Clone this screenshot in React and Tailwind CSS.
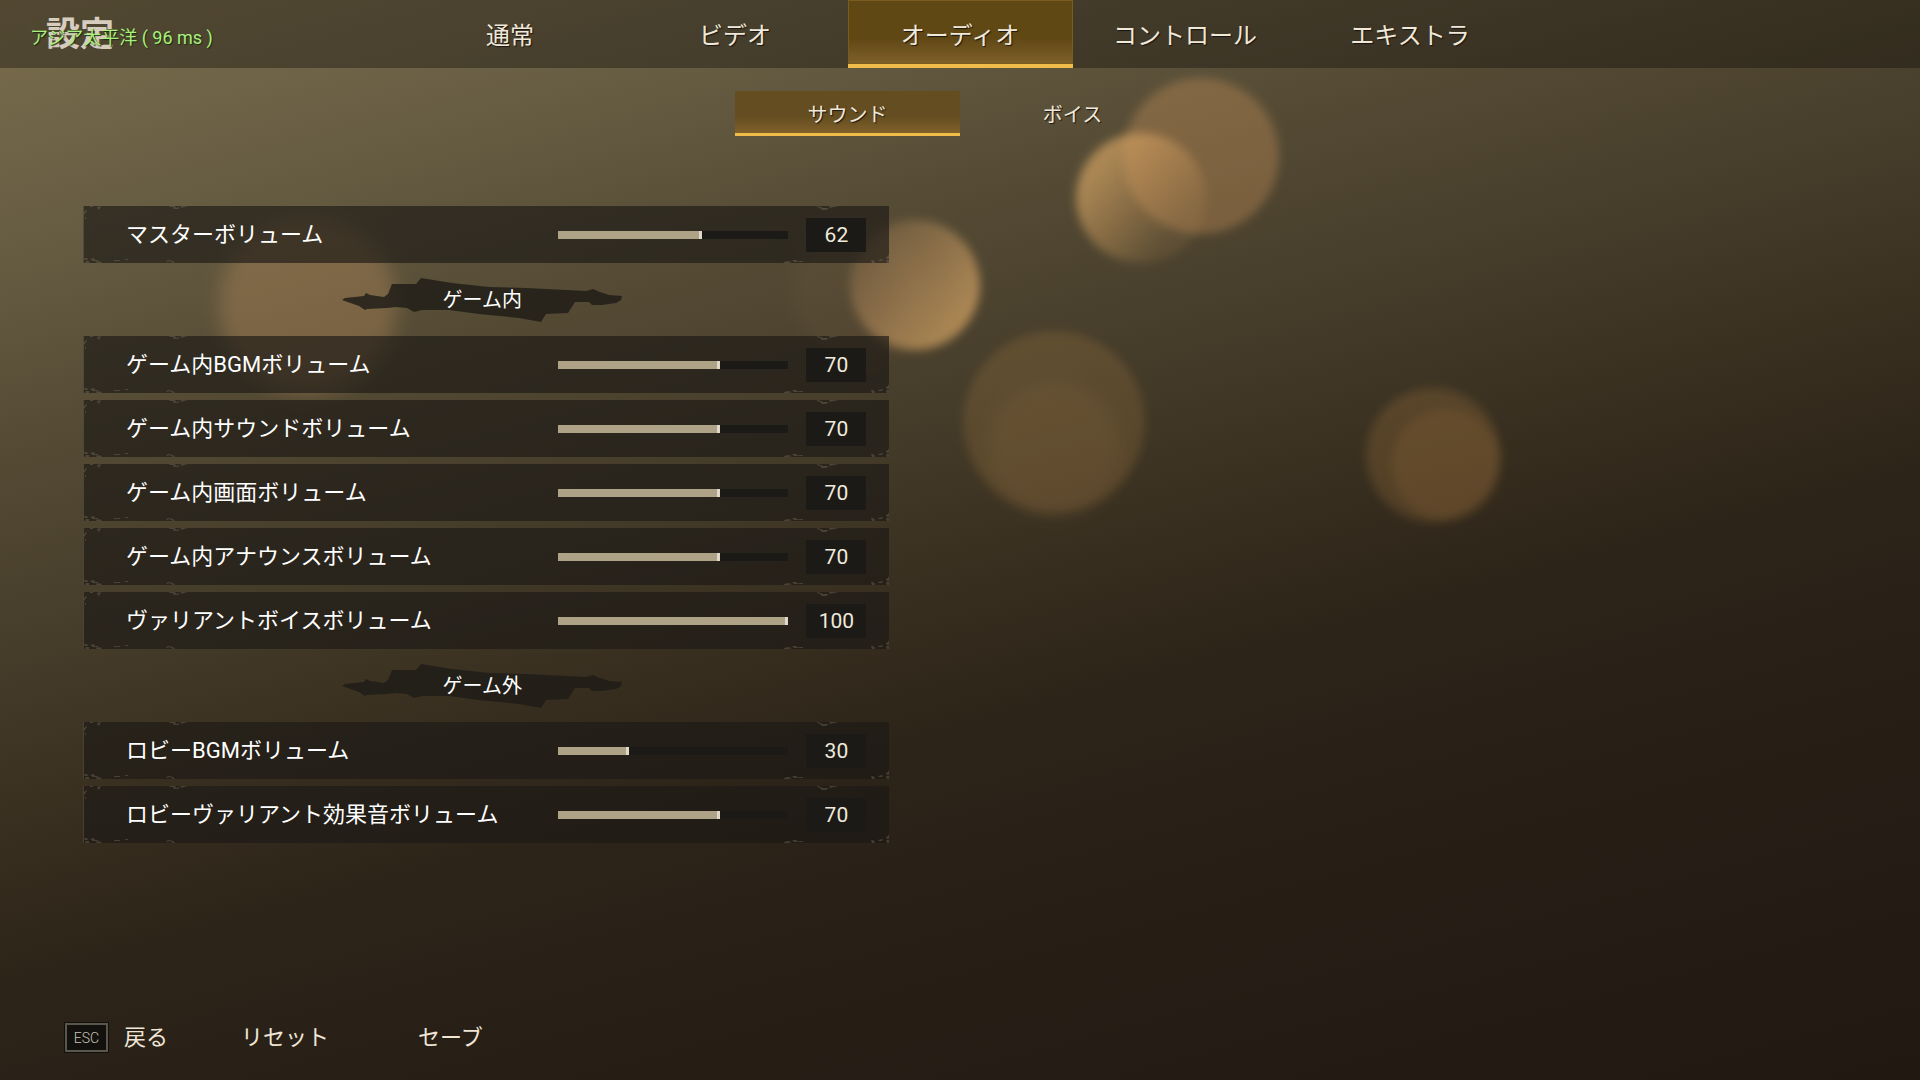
import { useState } from "react";

const tabs = ["通常", "ビデオ", "オーディオ", "コントロール", "エキストラ"];
const subTabs = ["サウンド", "ボイス"];

const groups = [
  { title: null, rows: [["マスターボリューム", 62]] },
  {
    title: "ゲーム内",
    rows: [
      ["ゲーム内BGMボリューム", 70],
      ["ゲーム内サウンドボリューム", 70],
      ["ゲーム内画面ボリューム", 70],
      ["ゲーム内アナウンスボリューム", 70],
      ["ヴァリアントボイスボリューム", 100],
    ],
  },
  {
    title: "ゲーム外",
    rows: [
      ["ロビーBGMボリューム", 30],
      ["ロビーヴァリアント効果音ボリューム", 70],
    ],
  },
];

function Bokeh() {
  return (
    <svg
      className="pointer-events-none absolute inset-0 -z-10 h-full w-full"
      viewBox="0 0 1920 1080"
      preserveAspectRatio="xMidYMid slice"
      aria-hidden="true"
    >
      <defs>
        <filter id="soft" x="-20%" y="-20%" width="140%" height="140%">
          <feGaussianBlur stdDeviation="5" />
        </filter>
        <filter id="softer" x="-20%" y="-20%" width="140%" height="140%">
          <feGaussianBlur stdDeviation="9" />
        </filter>
        <linearGradient id="litRight" x1="0.05" y1="0.1" x2="0.85" y2="0.75">
          <stop offset="0" stopColor="#e0a870" stopOpacity="0.12" />
          <stop offset="1" stopColor="#e0ac68" stopOpacity="0.64" />
        </linearGradient>
        <linearGradient id="litLeft" x1="0.15" y1="0.3" x2="0.8" y2="0.85">
          <stop offset="0" stopColor="#e0ac68" stopOpacity="0.62" />
          <stop offset="0.9" stopColor="#e0a860" stopOpacity="0.12" />
        </linearGradient>
      </defs>
      <circle cx="308" cy="305" r="89" fill="#e0a468" fillOpacity="0.25" filter="url(#softer)" />
      <circle cx="860" cy="292" r="68" fill="#e0a468" fillOpacity="0.05" filter="url(#softer)" />
      <circle cx="915" cy="285" r="65" fill="url(#litRight)" filter="url(#soft)" />
      <circle cx="1141" cy="198" r="65" fill="url(#litLeft)" filter="url(#soft)" />
      <circle cx="1201" cy="156" r="78" fill="#e0a060" fillOpacity="0.3" filter="url(#soft)" />
      <circle cx="1054" cy="422" r="91" fill="#d69850" fillOpacity="0.17" filter="url(#soft)" />
      <circle cx="1054" cy="450" r="68" fill="#d69850" fillOpacity="0.07" filter="url(#softer)" />
      <circle cx="1433" cy="455" r="67" fill="#d69850" fillOpacity="0.18" filter="url(#soft)" />
      <circle cx="1446" cy="464" r="55" fill="#d69850" fillOpacity="0.1" filter="url(#soft)" />
    </svg>
  );
}

function WornEdges() {
  return (
    <>
      <svg className="pointer-events-none absolute left-0 top-0" width="110" height="57" aria-hidden="true">
        <g fill="#a39472" fillOpacity="0.28">
          <path d="M0 0h1v57h-1zM1 6l3-2v1l-3 4zM2 11h1v2h-1zM14 1l4-1-1 2-1 2-1-1zM7 0h3v1h-3z" />
          <path d="M1 52l3 0 1 2-3 0zM7 53l4-1 1 2 3 0v1l-5 0zM3 55l3 0v2h-4zM14 55l5 1-1 1h-5zM31 54h6v1h-6zM42 53h3v1h-3z" />
          <path d="M86 0h6l1 2 4-1-2 2-4 0-1-2-3 0zM98 0h7l-4 1-3 1z" />
          <path d="M83 55l3-1 4 1 2 2h-2l-3-2-3 1z" />
        </g>
      </svg>
      <svg className="pointer-events-none absolute right-0 top-0" width="110" height="57" aria-hidden="true">
        <g fill="#a39472" fillOpacity="0.28">
          <path d="M38 0l4 1 2 1 6 0-3 2-4 0-2-2-3-1zM50 0h10l-5 1-4 1z" />
          <path d="M5 56l4-1 4 1-3 1h-5zM13 54l4 0 3 2-5 0zM20 55h4v1h-4z" />
          <path d="M110 48v5l-2 0-1-2 2-1zM107 54l3 0v3h-2zM99 54l5-1-1 2-3 0zM92 54h2l2 2-1 1h-2z" />
        </g>
      </svg>
    </>
  );
}

function VolumeRow({ label, initial, id }) {
  const [value, setValue] = useState(initial);
  return (
    <div className="relative flex h-[57px] items-center bg-[#1b1915]/65 pl-[43px] pr-[23px]">
      <WornEdges />
      <label htmlFor={id} className="flex-1 whitespace-nowrap text-[22px] leading-8 text-white">
        {label}
      </label>
      <input
        id={id}
        type="range"
        min="0"
        max="100"
        value={value}
        onChange={(e) => setValue(Number(e.target.value))}
        style={{ backgroundSize: `${value}% 100%` }}
        className="h-2 w-[230px] cursor-pointer appearance-none bg-[#1b1a17] bg-linear-to-r from-[#aea287] to-[#aea287] bg-no-repeat [&::-webkit-slider-thumb]:h-2 [&::-webkit-slider-thumb]:w-[3px] [&::-webkit-slider-thumb]:appearance-none [&::-webkit-slider-thumb]:bg-[#e0d9ca]"
      />
      <output
        htmlFor={id}
        className="ml-[18px] flex h-[34px] w-[60px] items-center justify-center bg-[#1b1a17] text-[21px] leading-8 text-[#f0eadb]"
      >
        {value}
      </output>
    </div>
  );
}

function SectionTitle({ children }) {
  return (
    <h2 className="relative isolate flex h-[73px] items-center justify-center pr-2 pt-px text-xl leading-7 text-white">
      <svg className="absolute -z-10" width="280" height="44" viewBox="0 0 280 44" aria-hidden="true">
        <path
          d="M0 22L3 20L22 18L24 15L28 17L42 19L46 16L50 6H74L79 0L110 5L147 9L184 10L225 12L244 13L251 11L258 14L267 17L280 18L279 22L274 25L260 27H250L247 24H233L226 35L204 36L199 44L177 40L137 36L107 32H80L72 34L65 30L54 29L45 30L25 31L23 32L17 28Z"
          fill="#1f1c17"
          fillOpacity="0.82"
        />
      </svg>
      {children}
    </h2>
  );
}

export default function App() {
  const [tab, setTab] = useState("オーディオ");
  const [sub, setSub] = useState("サウンド");

  return (
    <div className="relative isolate flex min-h-screen flex-col overflow-hidden bg-[linear-gradient(165deg,#7a6c4c_0%,#73674a_6%,#665c42_16%,#544a34_29%,#443b29_42%,#382f20_52%,#2d2419_62%,#281f17_72%,#211811_100%)] font-[Roboto,'Noto_Sans_CJK_JP',sans-serif]">
      <Bokeh />
      <header className="relative flex h-[68px] items-stretch justify-center bg-[#080604]/35">
        <h1 className="absolute left-[46px] top-2 text-[34px] font-bold leading-[52px] text-[#d6cdbf]">設定</h1>
        <p className="absolute left-[30px] top-[26px] text-lg leading-6 text-[#a9f07c] text-shadow-[1px_1px_1px_#1a2a10]">
          アジア太平洋 ( 96 ms )
        </p>
        <nav className="flex">
          {tabs.map((name) => (
            <button
              key={name}
              type="button"
              onClick={() => setTab(name)}
              className={
                "w-[225px] border-b-4 pt-2 text-2xl leading-8 text-[#f0e8d8] text-shadow-[1px_1px_1px_#1a1510] " +
                (tab === name
                  ? "border-[#f0bd4a] bg-linear-to-b from-[#604815] from-60% to-[#80602a] inset-ring inset-ring-[#7a5c20]"
                  : "border-transparent")
              }
            >
              {name}
            </button>
          ))}
        </nav>
      </header>

      <nav className="mt-[23px] flex justify-center">
        {subTabs.map((name) => (
          <button
            key={name}
            type="button"
            onClick={() => setSub(name)}
            className={
              "h-[45px] w-[225px] border-b-3 pt-1.5 text-xl leading-7 text-[#f0e8d8] text-shadow-[1px_1px_1px_#1a1510] " +
              (sub === name
                ? "border-[#f0bd4a] bg-linear-to-b from-[#644d20] from-60% to-[#80602a]"
                : "border-transparent")
            }
          >
            {name}
          </button>
        ))}
      </nav>

      <main className="ml-[83px] mt-[70px] w-[42%] min-w-[720px] flex-1">
        {groups.map((group, g) => (
          <section key={g}>
            {group.title && <SectionTitle>{group.title}</SectionTitle>}
            <div className="flex flex-col gap-[7px]">
              {group.rows.map(([label, value], r) => (
                <VolumeRow key={label} id={`volume-${g}-${r}`} label={label} initial={value} />
              ))}
            </div>
          </section>
        ))}
      </main>

      <footer className="flex h-[85px] items-center pl-16 text-[22px] leading-8 text-[#efe6d6]">
        <button type="button" className="flex items-center gap-[15px]">
          <kbd className="flex h-[31px] w-[45px] items-center justify-center border border-[#12100d] bg-[#12110e] font-[Roboto] text-sm font-light text-[#c9c4b6] inset-ring-2 inset-ring-[#5a564c]">
            ESC
          </kbd>
          戻る
        </button>
        <button type="button" className="ml-[73px]">
          リセット
        </button>
        <button type="button" className="ml-[89px]">
          セーブ
        </button>
      </footer>
    </div>
  );
}
